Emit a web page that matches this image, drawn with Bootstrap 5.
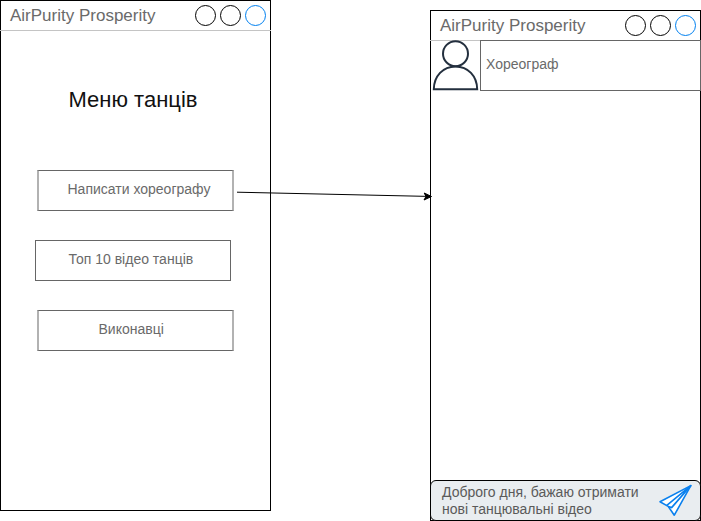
<!DOCTYPE html>
<html lang="uk">
<head>
<meta charset="utf-8">
<meta name="viewport" content="width=device-width, initial-scale=1">
<title>AirPurity Prosperity</title>
<link href="https://cdn.jsdelivr.net/npm/bootstrap@5.3.0/dist/css/bootstrap.min.css" rel="stylesheet">
<style>
body { font-family: "Liberation Sans", Arial, sans-serif; color: #6a6a6a; font-size: 14px; line-height: 17px; }
.board { width: 701px; height: 521px; }
.phone { width: 271px; height: 511px; border: 1px solid #000; }
.phone-chat { margin-top: 10px; }
.phone-bar { height: 30px; margin: 0 -1px; padding: 0 4px 0 10px; border-bottom: 1px solid #c4c4c4; }
.phone-title { font-size: 17px; line-height: 30px; }
.menu-title { font-size: 22px; line-height: 26px; color: #111; margin: 56px 0 0 67.5px; font-weight: 400; }
.menu-list { margin: 57px 0 0 34px; gap: 29px; }
.menu-item { width: 196px; height: 41px; border: 1px solid #666; padding-top: 10px; color: #6a6a6a; text-decoration: none; }
.menu-item.half { width: 197px; margin-left: 2px; border-width: 1px 2px; border-color: #666 #b2b2b2; }
.t1 { padding-left: 28.5px; } .t2 { padding-left: 32.5px; } .t3 { padding-left: 59.5px; }
.contact { height: 51px; margin-top: -1px; margin-right: -1px; }
.avatar { width: 49px; }
.contact-name { border: 1px solid #666; padding: 15px 0 0 5px; }
.composer { height: 41px; margin: 0 -1px -1px; border: 1px solid #000; border-radius: 6px; background: #e9edf0; color: #5a5a5a; padding: 3px 0 0 11px; }
.arrow { left: 230px; top: 185px; pointer-events: none; }
</style>
<script src="https://cdn.jsdelivr.net/npm/bootstrap@5.3.0/dist/js/bootstrap.bundle.min.js"></script>
</head>
<body class="bg-white overflow-hidden">
<main class="board position-relative d-flex justify-content-between align-items-start">
  <section class="phone d-flex flex-column">
    <header class="phone-bar d-flex justify-content-between flex-shrink-0">
      <span class="phone-title">AirPurity Prosperity</span>
      <svg width="73" height="29" fill="none" stroke="#000"><circle cx="11.5" cy="14.5" r="10"/><circle cx="36.5" cy="14.5" r="10"/><circle cx="61.5" cy="14.5" r="10" stroke="#0080f0"/></svg>
    </header>
    <h1 class="menu-title">Меню танців</h1>
    <nav class="menu-list d-flex flex-column">
      <a class="menu-item half t1" href="#">Написати хореографу</a>
      <a class="menu-item t2" href="#">Топ 10 відео танців</a>
      <a class="menu-item half t3" href="#">Виконавці</a>
    </nav>
  </section>
  <section class="phone phone-chat d-flex flex-column">
    <header class="phone-bar d-flex justify-content-between flex-shrink-0">
      <span class="phone-title">AirPurity Prosperity</span>
      <svg width="73" height="29" fill="none" stroke="#000"><circle cx="11.5" cy="14.5" r="10"/><circle cx="36.5" cy="14.5" r="10"/><circle cx="61.5" cy="14.5" r="10" stroke="#0080f0"/></svg>
    </header>
    <div class="contact d-flex flex-shrink-0">
      <svg class="avatar" width="49" height="51" fill="none" stroke="#232f3e" stroke-width="2"><circle cx="24.5" cy="13.7" r="12.5"/><path d="M2.8 49.3C3 36 12 26.5 24.5 26.5S46 36 46.2 49.3Z"/></svg>
      <div class="contact-name flex-grow-1">Хореограф</div>
    </div>
    <footer class="composer d-flex mt-auto">
      <span class="flex-grow-1 text-nowrap">Доброго дня, бажаю отримати<br>нові танцювальні відео</span>
      <svg width="42" height="36" viewBox="0 0 42 36" fill="#fff" stroke="#0a80ee" stroke-width="1.6" stroke-linejoin="round"><path d="M2 17.8 32.8 1.6 16.3 31.2 10.2 22.4Z"/><path fill="none" d="M8.8 21.4 32.8 1.6 13.6 23.6 10.2 22.4"/></svg>
    </footer>
  </section>
  <svg class="arrow position-absolute" width="206" height="20"><path d="M7 7.2 198 11.4" stroke="#000" fill="none"/><path d="M201.5 11.5 194 15 196 11.4 194.2 8Z" stroke="#000"/></svg>
</main>
</body>
</html>
